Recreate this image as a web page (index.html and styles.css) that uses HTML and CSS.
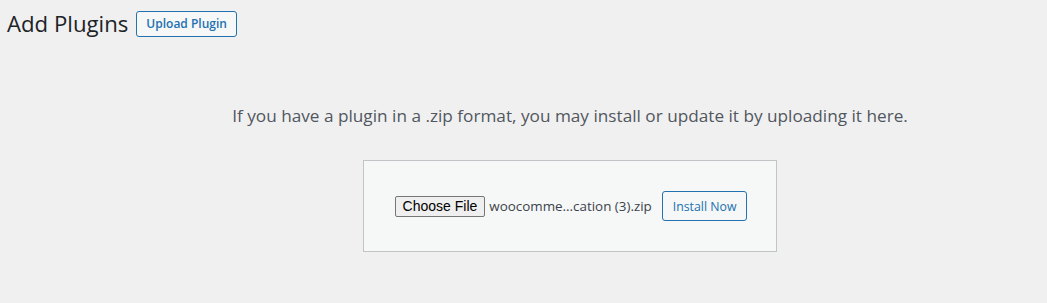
FILE: index.html
```html
<!DOCTYPE html>
<html lang="en">
<head>
  <meta charset="UTF-8">
  <title>Add Plugins</title>
  <link rel="stylesheet" href="styles.css">
</head>
<body>

<div class="wrap">
  <div class="page-head">
    <h1>Add Plugins</h1>
    <a class="page-title-action" href="#">Upload Plugin</a>
  </div>

  <div class="upload-plugin">
    <p class="install-help">If you have a plugin in a .zip format, you may install or update it by uploading it here.</p>
    <form class="wp-upload-form">
      <span class="file-input">
        <button type="button" class="choose-btn">Choose File</button>
        <span class="file-name">woocomme...cation (3).zip</span>
      </span>
      <button type="button" class="button">Install Now</button>
    </form>
  </div>
</div>

</body>
</html>
```

FILE: styles.css
```css
html, body { margin: 0; padding: 0; }
body { background: #f0f0f1; color: #3c434a; font-family: "Open Sans", "Noto Sans", sans-serif; font-size: 13px; overflow: hidden; }
.wrap { padding: 0 0 0 7px; }
.page-head { display: flex; align-items: center; gap: 8px; padding-top: 11px; }
h1 { margin: 0; font-size: 22.2px; font-weight: 400; line-height: 26px; color: #1d2327; }
.page-title-action { display: inline-block; padding: 0 9px; height: 24px; line-height: 24px; border: 1px solid #2271b1; border-radius: 3px; background: #f6f7f7; color: #2271b1; font-size: 12px; font-weight: 600; text-decoration: none; }
.upload-plugin { text-align: center; margin-left: 86px; }
.install-help { margin: 0; padding-top: 67px; font-size: 17.2px; color: #50575e; line-height: 24px; }
.wp-upload-form { display: inline-flex; align-items: center; margin-top: 32px; padding: 30px 29px 30px 31px; border: 1px solid #c3c4c7; background: #f6f7f7; }
.file-input { display: inline-flex; align-items: center; gap: 4px; margin-right: 10px; }
.choose-btn { font-family: "Liberation Sans", Arial, sans-serif; font-size: 14px; color: #000; background: #efefef; border: 1px solid #767676; border-radius: 2px; padding: 0 7px; height: 21px; }
.file-name { font-size: 13.4px; color: #3c434a; }
.button { font-family: inherit; font-size: 12.3px; color: #2271b1; background: #f6f7f7; border: 1px solid #2271b1; border-radius: 3px; height: 30px; padding: 0 10px; }
```
